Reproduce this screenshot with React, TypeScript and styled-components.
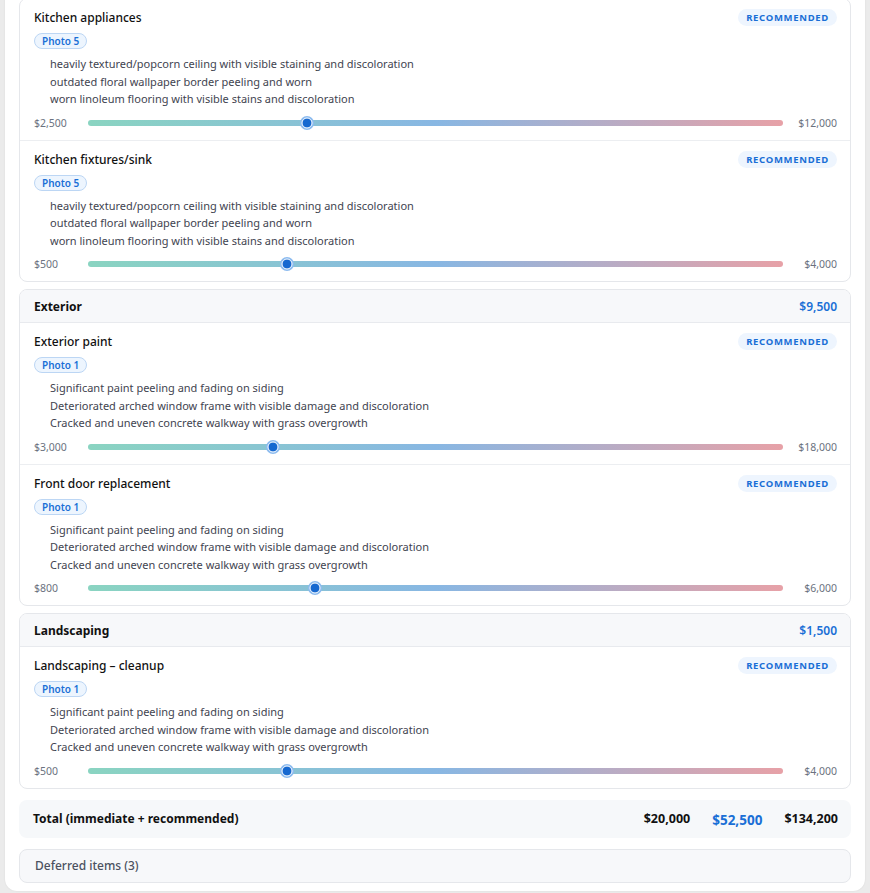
import styled, { createGlobalStyle } from 'styled-components';

const GlobalStyle = createGlobalStyle`
  html, body {
    margin: 0;
    padding: 0;
    background: #ebebeb;
    font-family: "Noto Sans", "Open Sans", sans-serif;
    color: #111827;
  }
`;

const Backdrop = styled.div`
  padding: 0 5px 3px;
  overflow: hidden;
  height: 893px;
  box-sizing: border-box;
`;

const Panel = styled.div`
  background: #ffffff;
  border-radius: 0 0 12px 12px;
  margin-top: -2px;
  padding: 0 14px 8px;
  box-shadow: 0 0 2px rgba(0, 0, 0, 0.08);
`;

const Group = styled.section`
  border: 1px solid #e5e7eb;
  border-radius: 8px;
  overflow: hidden;
  & + & {
    margin-top: 7px;
  }
`;

const GroupHeader = styled.div`
  display: flex;
  justify-content: space-between;
  align-items: center;
  height: 32px;
  padding: 0 13px 0 14px;
  background: #f7f8fa;
  border-bottom: 1px solid #e8eaee;
  font-size: 12px;
`;

const GroupName = styled.span`
  font-weight: 700;
  color: #111;
`;

const GroupAmount = styled.span`
  font-weight: 600;
  color: #1a6fd6;
`;

const Item = styled.div`
  padding: 10px 13px 9px 14px;
  & + & {
    border-top: 1px solid #eceef1;
  }
`;

const ItemTop = styled.div`
  display: flex;
  justify-content: space-between;
  align-items: flex-start;
`;

const ItemTitle = styled.div`
  font-size: 12px;
  font-weight: 500;
  line-height: 18px;
  color: #111;
`;

const Badge = styled.span`
  background: #eef5fe;
  color: #1a6fd6;
  border-radius: 9px;
  padding: 0 8px;
  height: 17px;
  line-height: 17px;
  font-size: 9.5px;
  font-weight: 700;
  letter-spacing: 0.7px;
`;

const PhotoChip = styled.span`
  display: inline-block;
  margin-top: 6px;
  height: 14px;
  line-height: 14px;
  padding: 0 7px;
  border: 1px solid #bcd6f4;
  background: #edf5fe;
  border-radius: 8px;
  color: #1a6fd6;
  font-size: 10px;
  font-weight: 600;
`;

const Notes = styled.ul`
  list-style: none;
  margin: 5px 0 0;
  padding: 0 0 0 16px;
  font-size: 11px;
  line-height: 17.5px;
  color: #3f4450;
`;

const SliderRow = styled.div`
  display: grid;
  grid-template-columns: 54px 1fr 54px;
  align-items: center;
  margin-top: 7px;
  height: 16px;
  font-size: 10.5px;
  color: #6b7280;
`;

const MaxLabel = styled.span`
  text-align: right;
`;

const Track = styled.div`
  position: relative;
  height: 6px;
  border-radius: 3px;
  background: linear-gradient(90deg, #8ad4c1 0%, #88b7e3 50%, #e7a1a7 100%);
`;

const Thumb = styled.span`
  position: absolute;
  top: 50%;
  width: 9px;
  height: 9px;
  border-radius: 50%;
  background: #1668d0;
  border: 1.5px solid #ffffff;
  box-shadow: 0 0 0 1.5px #8cbbef;
  transform: translate(-50%, -50%);
`;

const TotalBar = styled.div`
  display: flex;
  align-items: center;
  margin-top: 11px;
  height: 38px;
  padding: 0 13px 0 14px;
  border-radius: 8px;
  background: #f6f8fa;
  font-size: 12px;
  font-weight: 700;
  color: #111;
`;

const TotalLabel = styled.span`
  flex: 1;
`;

const TotalFigures = styled.div`
  display: flex;
  align-items: center;
  gap: 22px;
`;

const Figure = styled.span<{ $accent?: boolean }>`
  color: ${(p) => (p.$accent ? '#1a6fd6' : '#111')};
  font-size: ${(p) => (p.$accent ? '13.5px' : '12.5px')};
  padding-top: ${(p) => (p.$accent ? '2px' : '0')};
`;

const Deferred = styled.div`
  margin-top: 11px;
  height: 32px;
  display: flex;
  align-items: center;
  padding: 0 15px;
  border: 1px solid #e5e7eb;
  border-radius: 8px;
  background: #f7f8fa;
  font-size: 12px;
  font-weight: 500;
  color: #4b5160;
`;

type Line = {
  title: string;
  photo: number;
  notes: string[];
  min: number;
  max: number;
  value: number;
};

const kitchenNotes = [
  'heavily textured/popcorn ceiling with visible staining and discoloration',
  'outdated floral wallpaper border peeling and worn',
  'worn linoleum flooring with visible stains and discoloration',
];

const exteriorNotes = [
  'Significant paint peeling and fading on siding',
  'Deteriorated arched window frame with visible damage and discoloration',
  'Cracked and uneven concrete walkway with grass overgrowth',
];

const kitchen: Line[] = [
  { title: 'Kitchen appliances', photo: 5, notes: kitchenNotes, min: 2500, max: 12000, value: 5500 },
  { title: 'Kitchen fixtures/sink', photo: 5, notes: kitchenNotes, min: 500, max: 4000, value: 1500 },
];

const exterior: Line[] = [
  { title: 'Exterior paint', photo: 1, notes: exteriorNotes, min: 3000, max: 18000, value: 7000 },
  { title: 'Front door replacement', photo: 1, notes: exteriorNotes, min: 800, max: 6000, value: 2500 },
];

const landscaping: Line[] = [
  { title: 'Landscaping – cleanup', photo: 1, notes: exteriorNotes, min: 500, max: 4000, value: 1500 },
];

const money = (n: number) => '$' + n.toLocaleString('en-US');

const LineItem = ({ line }: { line: Line }) => {
  const pct = ((line.value - line.min) / (line.max - line.min)) * 100;
  return (
    <Item>
      <ItemTop>
        <ItemTitle>{line.title}</ItemTitle>
        <Badge>RECOMMENDED</Badge>
      </ItemTop>
      <PhotoChip>Photo {line.photo}</PhotoChip>
      <Notes>
        {line.notes.map((n) => (
          <li key={n}>{n}</li>
        ))}
      </Notes>
      <SliderRow>
        <span>{money(line.min)}</span>
        <Track>
          <Thumb style={{ left: `${pct}%` }} />
        </Track>
        <MaxLabel>{money(line.max)}</MaxLabel>
      </SliderRow>
    </Item>
  );
};

const Section = ({ name, lines }: { name?: string; lines: Line[] }) => {
  const sum = lines.reduce((s, l) => s + l.value, 0);
  return (
    <Group>
      {name && (
        <GroupHeader>
          <GroupName>{name}</GroupName>
          <GroupAmount>{money(sum)}</GroupAmount>
        </GroupHeader>
      )}
      {lines.map((l) => (
        <LineItem key={l.title} line={l} />
      ))}
    </Group>
  );
};

export default function App() {
  return (
    <>
      <GlobalStyle />
      <Backdrop>
        <Panel>
          <Section lines={kitchen} />
          <Section name="Exterior" lines={exterior} />
          <Section name="Landscaping" lines={landscaping} />
          <TotalBar>
            <TotalLabel>Total (immediate + recommended)</TotalLabel>
            <TotalFigures>
              <Figure>$20,000</Figure>
              <Figure $accent>$52,500</Figure>
              <Figure>$134,200</Figure>
            </TotalFigures>
          </TotalBar>
          <Deferred>Deferred items (3)</Deferred>
        </Panel>
      </Backdrop>
    </>
  );
}
